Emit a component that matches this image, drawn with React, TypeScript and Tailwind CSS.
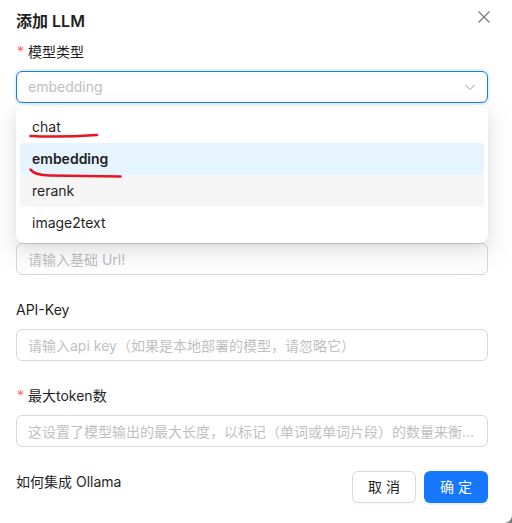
import React from "react";

function Label({ text, required, hidden }: { text: string; required?: boolean; hidden?: boolean }) {
  return (
    <div className={"flex items-center h-[22px] mb-2 text-sm leading-[22px] text-[#1f1f1f]" + (hidden ? " invisible" : "")}>
      {required && (
        <span className="text-[#ff4d4f] mr-1 ml-px text-sm font-['Liberation_Serif',serif]">*</span>
      )}
      <span>{text}</span>
    </div>
  );
}

function TextInput({ placeholder, hidden }: { placeholder: string; hidden?: boolean }) {
  return (
    <input
      readOnly
      placeholder={placeholder}
      className={
        "block w-full h-8 rounded-md border border-[#d9d9d9] bg-white px-[11px] text-sm text-[#1f1f1f] placeholder:text-[#bfbfbf] outline-none truncate" +
        (hidden ? " invisible" : "")
      }
    />
  );
}

export default function App() {
  const options = [
    { label: "chat", state: "" },
    { label: "embedding", state: "selected" },
    { label: "rerank", state: "hover" },
    { label: "image2text", state: "" },
  ];
  return (
    <div className="relative w-[512px] h-[523px] overflow-hidden bg-[#7a7a7a] font-[Inter,'Noto_Sans_CJK_SC',sans-serif]">
      <div className="relative w-full h-full bg-white rounded-br-lg pl-4 pr-6">
        {/* header */}
        <div className="pt-[9px]">
          <div className="h-6 leading-6 text-base font-semibold text-[#1f1f1f]">添加 LLM</div>
        </div>
        <button className="absolute top-[11px] right-[22px] w-3 h-3 flex items-center justify-center">
          <svg width="12" height="12" viewBox="0 0 12 12" fill="none">
            <path d="M0.5 0.5L11.5 11.5M11.5 0.5L0.5 11.5" stroke="#7c7c7c" strokeWidth="1.3" />
          </svg>
        </button>

        {/* form */}
        <div className="mt-2">
          <div className="mb-6">
            <Label text="模型类型" required />
            <div className="relative h-8 w-full rounded-md border border-[#1677ff] bg-white px-[11px] flex items-center shadow-[0_0_0_2px_rgba(5,145,255,0.1)]">
              <span className="text-sm text-[#bfbfbf]">embedding</span>
              <svg className="absolute right-[11px] top-1/2 -translate-y-1/2" width="12" height="12" viewBox="0 0 12 12" fill="none">
                <path d="M1.5 4L6 8.5L10.5 4" stroke="#bfbfbf" strokeWidth="1.1" />
              </svg>
            </div>
          </div>
          <div className="mb-6">
            <Label text="模型名称" required hidden />
            <TextInput placeholder="请输入模型名称!" hidden />
          </div>
          <div className="mb-6">
            <Label text="基础 Url" required hidden />
            <TextInput placeholder="请输入基础 Url!" />
          </div>
          <div className="mb-6">
            <Label text="API-Key" />
            <TextInput placeholder="请输入api key（如果是本地部署的模型，请忽略它）" />
          </div>
          <div className="mb-6">
            <Label text="最大token数" required />
            <TextInput placeholder="这设置了模型输出的最大长度，以标记（单词或单词片段）的数量来衡量。" />
          </div>
        </div>

        {/* footer */}
        <div className="flex items-start justify-between">
          <span className="text-sm leading-[22px] text-[#1f1f1f]">如何集成 Ollama</span>
          <div className="flex gap-2">
            <button className="h-8 w-16 rounded-md border border-[#d9d9d9] bg-white text-sm text-[#1f1f1f] shadow-[0_2px_0_rgba(0,0,0,0.02)]">
              取 消
            </button>
            <button className="h-8 w-16 rounded-md bg-[#1677ff] text-sm text-white shadow-[0_2px_0_rgba(5,145,255,0.1)]">
              确 定
            </button>
          </div>
        </div>

        {/* dropdown */}
        <div className="absolute top-[107px] left-4 w-[472px] rounded-lg bg-white p-1 shadow-[0_6px_16px_0_rgba(0,0,0,0.08),0_3px_6px_-4px_rgba(0,0,0,0.12),0_9px_28px_8px_rgba(0,0,0,0.05)]">
          {options.map((o) => (
            <div
              key={o.label}
              className={
                "h-8 px-3 flex items-center rounded text-sm text-[#1f1f1f] " +
                (o.state === "selected"
                  ? "bg-[#e6f4ff] font-semibold"
                  : o.state === "hover"
                  ? "bg-[#f5f5f5]"
                  : "")
              }
            >
              {o.label}
            </div>
          ))}
        </div>

        {/* annotation strokes */}
        <svg className="absolute left-0 top-0 pointer-events-none" width="512" height="523" viewBox="0 0 512 523" fill="none">
          <path d="M30.5 136 Q60 137.5 97 135" stroke="#e8141f" strokeWidth="2.6" strokeLinecap="round" />
          <path d="M30.5 169.5 Q34 175 50 175.5 L120.5 176.5" stroke="#e8141f" strokeWidth="2.6" strokeLinecap="round" />
        </svg>
      </div>
    </div>
  );
}
